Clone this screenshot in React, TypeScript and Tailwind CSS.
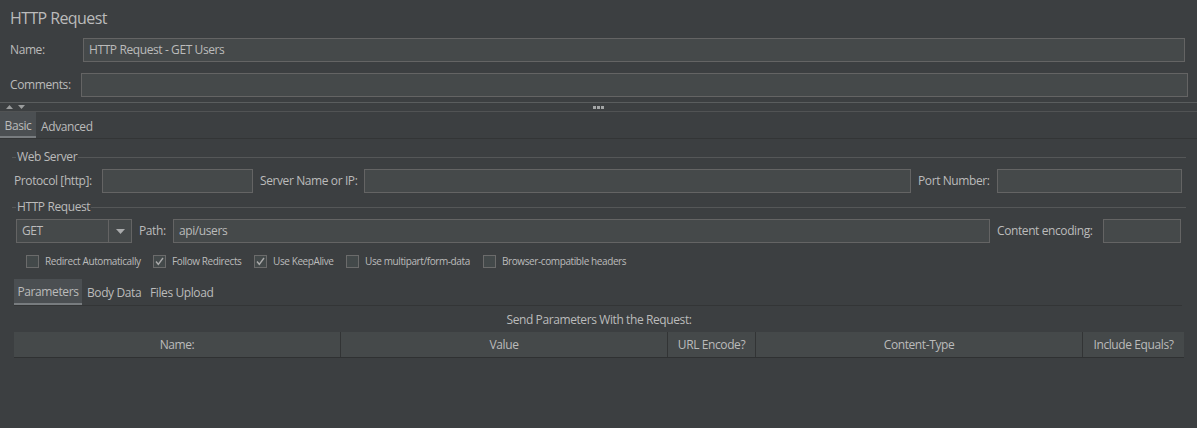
import React from "react";

const font = "font-['Open_Sans','Noto_Sans',sans-serif] tracking-[-0.4px]";

function TextBox({ value, className = "" }: { value?: string; className?: string }) {
  return (
    <div
      className={`h-[24px] bg-[#45494a] border border-[#646464] flex items-center px-[5px] text-[12px] text-[#bbbbbb] whitespace-nowrap overflow-hidden ${className}`}
    >
      {value}
    </div>
  );
}

function Titled({ title }: { title: string }) {
  return (
    <div className="flex items-center h-[16px] ml-[12px] mr-[11px]">
      <div className="w-[4px] h-px bg-[#555758]" />
      <span className="px-[1px] text-[12px] leading-[16px]">{title}</span>
      <div className="flex-1 h-px bg-[#555758]" />
    </div>
  );
}

function Check({ label, checked, width }: { label: string; checked?: boolean; width: string }) {
  return (
    <div className={`flex items-center gap-[6px] shrink-0 ${width}`}>
      <div className="w-[13px] h-[13px] border border-[#6b6b6b] bg-[#43494a] flex items-center justify-center">
        {checked && (
          <svg width="11" height="11" viewBox="0 0 11 11">
            <path d="M2 5.5 L4.3 8.3 L9 2" fill="none" stroke="#a9a9a9" strokeWidth="1.4" />
          </svg>
        )}
      </div>
      <span className="text-[10px] leading-[14px] whitespace-nowrap">{label}</span>
    </div>
  );
}

export default function App() {
  const columns = [
    { label: "Name:", w: "w-[327px]" },
    { label: "Value", w: "w-[327px]" },
    { label: "URL Encode?", w: "w-[88px]" },
    { label: "Content-Type", w: "w-[327px]" },
    { label: "Include Equals?", w: "w-[101px]" },
  ];

  return (
    <div className={`w-[1197px] h-[428px] bg-[#3c3f41] text-[#bbbbbb] overflow-hidden ${font}`}>
      {/* header */}
      <div className="h-[38px] pl-[10px] text-[16px] leading-[36px] tracking-[-0.6px]">HTTP Request</div>

      <div className="flex items-center pl-[10px] pr-[12px]">
        <span className="w-[73px] text-[12px]">Name:</span>
        <TextBox value="HTTP Request - GET Users" className="flex-1" />
      </div>
      <div className="flex items-center pl-[10px] pr-[9px] mt-[11px]">
        <span className="w-[71px] text-[12px]">Comments:</span>
        <TextBox className="flex-1" />
      </div>

      {/* splitter */}
      <div className="mt-[5px] h-[10px] border-t border-b border-t-[#5a5d5e] border-b-[#515354] grid grid-cols-[1fr_auto_1fr] items-center">
        <div className="flex items-center gap-[5px] pl-[6px]">
          <svg width="7" height="4" viewBox="0 0 7 4">
            <path d="M0 4 L3.5 0 L7 4 Z" fill="#9a9c9d" />
          </svg>
          <svg width="7" height="4" viewBox="0 0 7 4">
            <path d="M0 0 L3.5 4 L7 0 Z" fill="#9a9c9d" />
          </svg>
        </div>
        <div className="flex gap-[1px]">
          <div className="w-[3px] h-[3px] bg-[#a3a5a6]" />
          <div className="w-[3px] h-[3px] bg-[#a3a5a6]" />
          <div className="w-[3px] h-[3px] bg-[#a3a5a6]" />
        </div>
        <div />
      </div>

      {/* main tabs */}
      <div className="h-[27px] flex border-b border-[#333536] text-[12px]">
        <div className="w-[36px] pt-[3px] flex items-center justify-center bg-[#4b4f52] border-b-2 border-[#787c7f]">Basic</div>
        <div className="pl-[5px] pt-[3px] flex items-center">Advanced</div>
      </div>

      <div className="mt-[10px]">
        <Titled title="Web Server" />
        <div className="flex items-center pl-[14px] pr-[15px] mt-[4px] text-[12px]">
          <span className="w-[88px] whitespace-nowrap">Protocol [http]:</span>
          <TextBox className="w-[151px]" />
          <span className="w-[111px] pl-[7px] whitespace-nowrap">Server Name or IP:</span>
          <TextBox className="flex-1" />
          <span className="w-[86px] pl-[7px] whitespace-nowrap">Port Number:</span>
          <TextBox className="w-[185px]" />
        </div>

        <div className="mt-[6px]">
          <Titled title="HTTP Request" />
        </div>
        <div className="flex items-center pl-[16px] pr-[16px] mt-[4px] text-[12px]">
          <div className="w-[116px] h-[24px] bg-[#45494a] border border-[#646464] flex">
            <div className="flex-1 flex items-center px-[5px]">GET</div>
            <div className="w-[23px] border-l border-[#646464] flex items-center justify-center">
              <svg width="9" height="5" viewBox="0 0 9 5">
                <path d="M0 0 L9 0 L4.5 5 Z" fill="#a9abac" />
              </svg>
            </div>
          </div>
          <span className="w-[41px] pl-[7px] whitespace-nowrap">Path:</span>
          <TextBox value="api/users" className="flex-1" />
          <span className="w-[113px] pl-[7px] whitespace-nowrap">Content encoding:</span>
          <TextBox className="w-[78px]" />
        </div>

        <div className="flex items-center pl-[26px] mt-[11px] h-[14px]">
          <Check label="Redirect Automatically" width="w-[127px]" />
          <Check label="Follow Redirects" checked width="w-[101px]" />
          <Check label="Use KeepAlive" checked width="w-[92px]" />
          <Check label="Use multipart/form-data" width="w-[137px]" />
          <Check label="Browser-compatible headers" width="w-[200px]" />
        </div>

        {/* parameter tabs */}
        <div className="mt-[11px] ml-[14px] mr-[15px] h-[27px] flex border-b border-[#333536] text-[12px]">
          <div className="w-[68px] pt-[2px] flex items-center justify-center bg-[#4b4f52] border-b-2 border-[#787c7f] whitespace-nowrap">Parameters</div>
          <div className="w-[63px] pl-[5px] pt-[2px] flex items-center whitespace-nowrap">Body Data</div>
          <div className="pl-[5px] pt-[2px] flex items-center whitespace-nowrap">Files Upload</div>
        </div>

        <div className="ml-[14px] mr-[13px]">
          <div className="mt-[6px] h-[16px] text-center text-[12px] leading-[16px]">
            Send Parameters With the Request:
          </div>
          <div className="mt-[4px] h-[26px] flex bg-[#45494a] border-b border-[#2f3132] text-[12px]">
            {columns.map((c, i) => (
              <div
                key={c.label}
                className={`${c.w} flex items-center justify-center ${
                  i < columns.length - 1 ? "border-r border-[#323435]" : ""
                }`}
              >
                {c.label}
              </div>
            ))}
          </div>
        </div>
      </div>
    </div>
  );
}
